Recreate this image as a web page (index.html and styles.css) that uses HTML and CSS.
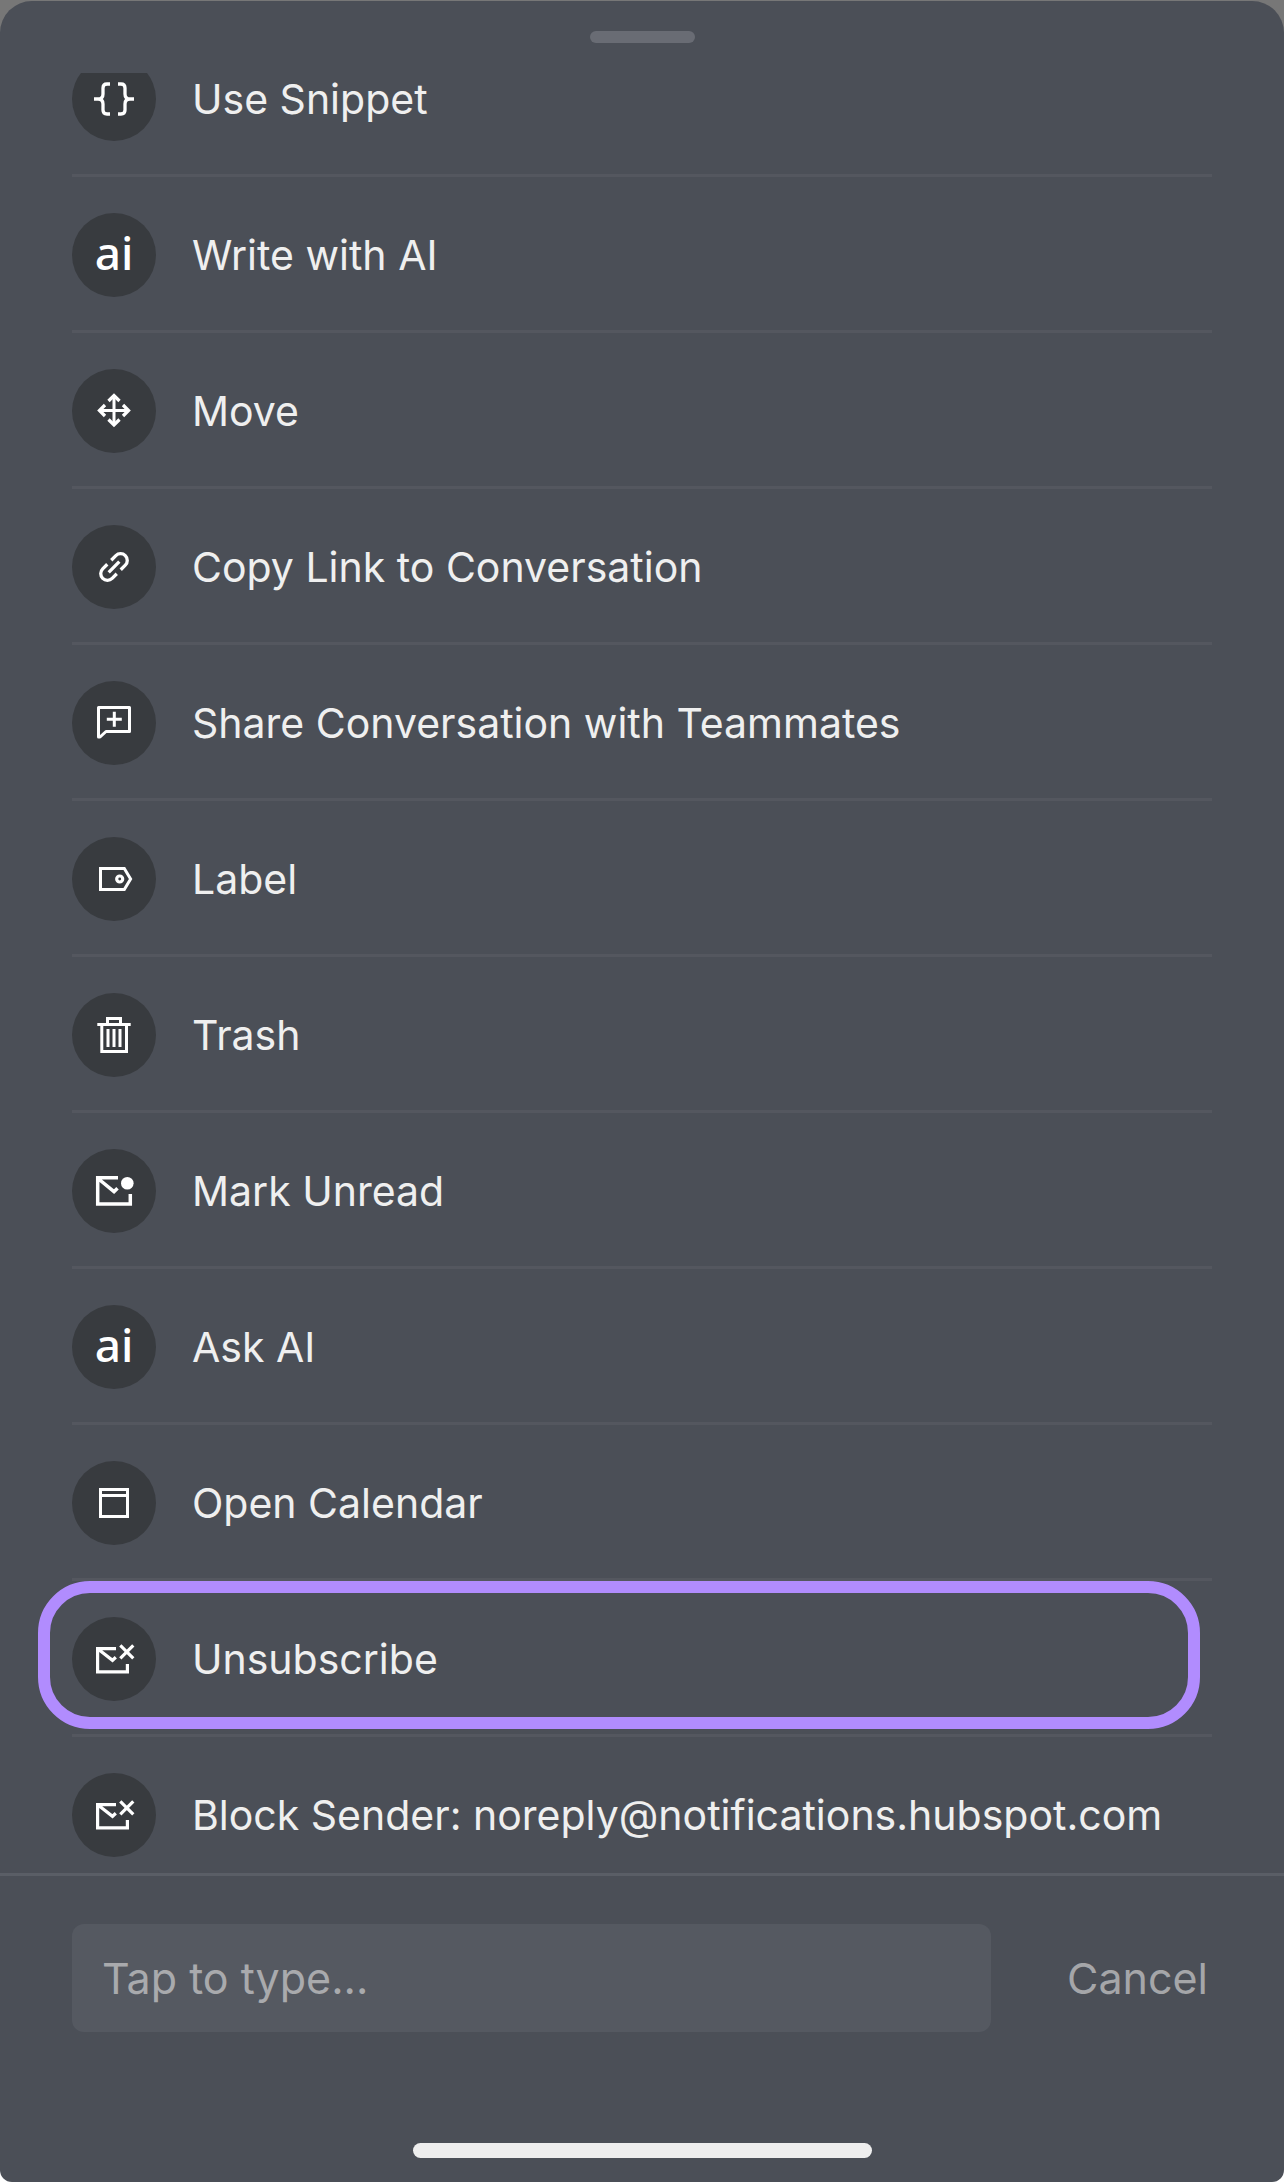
FILE: index.html
```html
<!DOCTYPE html>
<html lang="en">
<head>
<meta charset="utf-8">
<meta name="viewport" content="width=device-width, initial-scale=1">
<title>Conversation actions</title>
<link rel="stylesheet" href="styles.css">
</head>
<body>
<main class="sheet">
  <div class="handle"></div>
  <ul class="actions">
    <li class="action"><button class="action-button" type="button">
      <span class="badge"><svg class="icon" viewBox="0 0 84 84" aria-hidden="true"><path stroke-width="3.3" d="M38 27h-3q-4 0-4 4v6q0 5-5 5h-4 4q5 0 5 5v6q0 4 4 4h3M46 27h3q4 0 4 4v6q0 5 5 5h4-4q-5 0-5 5v6q0 4-4 4h-3"/></svg></span>
      <span class="name">Use Snippet</span></button></li>
    <li class="action"><button class="action-button" type="button">
      <span class="badge badge-text" aria-hidden="true">ai</span>
      <span class="name">Write with AI</span></button></li>
    <li class="action"><button class="action-button" type="button">
      <span class="badge"><svg class="icon" viewBox="0 0 84 84" aria-hidden="true"><path stroke-width="3" d="M42 27v29M28 41.500h28"/><path stroke-width="3.3" d="M36.500 32l5.500-5.500 5.500 5.500M36.500 50.500l5.500 5.500 5.500-5.500M33 36l-5.500 5.500 5.500 5.500M51 36l5.500 5.500-5.500 5.500"/></svg></span>
      <span class="name">Move</span></button></li>
    <li class="action"><button class="action-button" type="button">
      <span class="badge"><svg class="icon" viewBox="0 0 84 84" aria-hidden="true"><path stroke-width="3.3" transform="translate(42 42) rotate(-45)" d="M2.800-6.700H9.300a6.700 6.700 0 0 1 0 13.400H2.800M-2.800-6.700H-9.300a6.700 6.700 0 0 0 0 13.400H-2.800M-7.500 0h15"/></svg></span>
      <span class="name">Copy Link to Conversation</span></button></li>
    <li class="action"><button class="action-button" type="button">
      <span class="badge"><svg class="icon" viewBox="0 0 84 84" aria-hidden="true"><path stroke-width="3" stroke-linejoin="round" d="M26.500 26.500h31v24H34l-6 5.500h-1.500z"/><path stroke-width="3" d="M42.300 30.800v15M34.800 38.300h15"/></svg></span>
      <span class="name">Share Conversation with Teammates</span></button></li>
    <li class="action"><button class="action-button" type="button">
      <span class="badge"><svg class="icon" viewBox="0 0 84 84" aria-hidden="true"><path stroke-width="3" d="M28.500 31.500H52.300L58.600 42l-6.300 10.500H28.500z"/><circle stroke-width="3.200" cx="47.700" cy="42" r="3"/></svg></span>
      <span class="name">Label</span></button></li>
    <li class="action"><button class="action-button" type="button">
      <span class="badge"><svg class="icon" viewBox="0 0 84 84" aria-hidden="true"><path stroke-width="3" d="M35.500 31v-5.500h13V31M25.300 31.500h33.400M29.800 32v26.500h24.700V32M36 36v18M42 36v18M48 36v18"/></svg></span>
      <span class="name">Trash</span></button></li>
    <li class="action"><button class="action-button" type="button">
      <span class="badge"><svg class="icon" viewBox="0 0 84 84" aria-hidden="true"><path stroke-width="3.500" d="M46 28.700H25.700v26.300h32.600V45M26 29.500l16 13.200 3.500-3.500"/><circle class="solid" cx="55.300" cy="34.300" r="6.300"/></svg></span>
      <span class="name">Mark Unread</span></button></li>
    <li class="action"><button class="action-button" type="button">
      <span class="badge badge-text" aria-hidden="true">ai</span>
      <span class="name">Ask AI</span></button></li>
    <li class="action"><button class="action-button" type="button">
      <span class="badge"><svg class="icon" viewBox="0 0 84 84" aria-hidden="true"><path stroke-width="3" d="M28.500 28.500h27v27h-27zM28.500 34.500h27"/></svg></span>
      <span class="name">Open Calendar</span></button></li>
    <li class="action highlighted"><button class="action-button" type="button">
      <span class="badge"><svg class="icon" viewBox="0 0 84 84" aria-hidden="true"><path stroke-width="3.200" d="M44 31.600H25.600v23.200h29.800V47M26 32l14.500 11.300 3.300-3M48.300 28.300l13 13M61.300 28.300l-13 13"/></svg></span>
      <span class="name">Unsubscribe</span></button></li>
    <li class="action"><button class="action-button" type="button">
      <span class="badge"><svg class="icon" viewBox="0 0 84 84" aria-hidden="true"><path stroke-width="3.200" d="M44 31.600H25.600v23.200h29.800V47M26 32l14.500 11.300 3.300-3M48.300 28.300l13 13M61.300 28.300l-13 13"/></svg></span>
      <span class="name">Block Sender: noreply@notifications.hubspot.com</span></button></li>
  </ul>
  <footer class="footer">
    <form class="search">
      <input class="field" type="text" placeholder="Tap to type..." aria-label="Tap to type">
      <button class="cancel" type="button">Cancel</button>
    </form>
    <div class="home-indicator"></div>
  </footer>
</main>
</body>
</html>
```
FILE: styles.css
```css
* {
  box-sizing: border-box;
}

body {
  margin: 0;
  padding-top: 1px;
  background: linear-gradient(#777777 50%, #ffffff 50%);
  font-family: Inter, "Liberation Sans", sans-serif;
  color: #efefef;
}

.sheet {
  display: flex;
  flex-direction: column;
  border-radius: 32px 32px 12px 12px;
  background: #4b4f57;
  overflow: hidden;
}

.handle {
  width: 105px;
  height: 12px;
  margin: 30px auto;
  border-radius: 6px;
  background: #696c74;
}

.actions {
  margin: 0;
  padding: 0 72px;
  list-style: none;
  overflow: hidden;
}

.action {
  position: relative;
  border-bottom: 3px solid #54575f;
}

.action:first-child {
  margin-top: -52px;
}

.action:last-child {
  border-bottom: 0;
}

.action-button {
  display: flex;
  align-items: center;
  gap: 36px;
  width: 100%;
  padding: 36px 0 33px;
  border: 0;
  background: none;
  font: inherit;
  font-size: 41px;
  line-height: 52px;
  color: inherit;
  text-align: left;
}

.action:last-child .action-button {
  padding-bottom: 16px;
}

.highlighted::after {
  content: "";
  position: absolute;
  top: 0;
  right: 12px;
  bottom: 5px;
  left: -34px;
  border: 12px solid #b18cfe;
  border-radius: 52px;
  pointer-events: none;
}

.badge {
  flex: none;
  display: flex;
  align-items: center;
  justify-content: center;
  width: 84px;
  height: 84px;
  border-radius: 50%;
  background: #383b3f;
  color: #ffffff;
}

.badge-text {
  padding-bottom: 6px;
  font-family: "Noto Sans", sans-serif;
  font-size: 46px;
  font-weight: 500;
}

.icon {
  width: 84px;
  height: 84px;
  fill: none;
  stroke: currentColor;
}

.solid {
  fill: currentColor;
  stroke: none;
}

.footer {
  padding: 48px 72px 24px;
  border-top: 3px solid #5a5e66;
}

.search {
  display: flex;
  gap: 72px;
  margin: 0;
}

.field {
  flex: 1;
  min-width: 0;
  height: 108px;
  padding: 0 30px;
  border: 0;
  border-radius: 12px;
  background: #555961;
  font: inherit;
  font-size: 43px;
  color: inherit;
}

.field::placeholder {
  color: #a9aaad;
  opacity: 1;
}

.cancel {
  padding: 0 4px;
  border: 0;
  background: none;
  font: inherit;
  font-size: 43px;
  color: #a5a6a9;
}

.home-indicator {
  width: 459px;
  max-width: 100%;
  height: 15px;
  margin: 111px auto 0;
  border-radius: 8px;
  background: #eeeeee;
}
```
